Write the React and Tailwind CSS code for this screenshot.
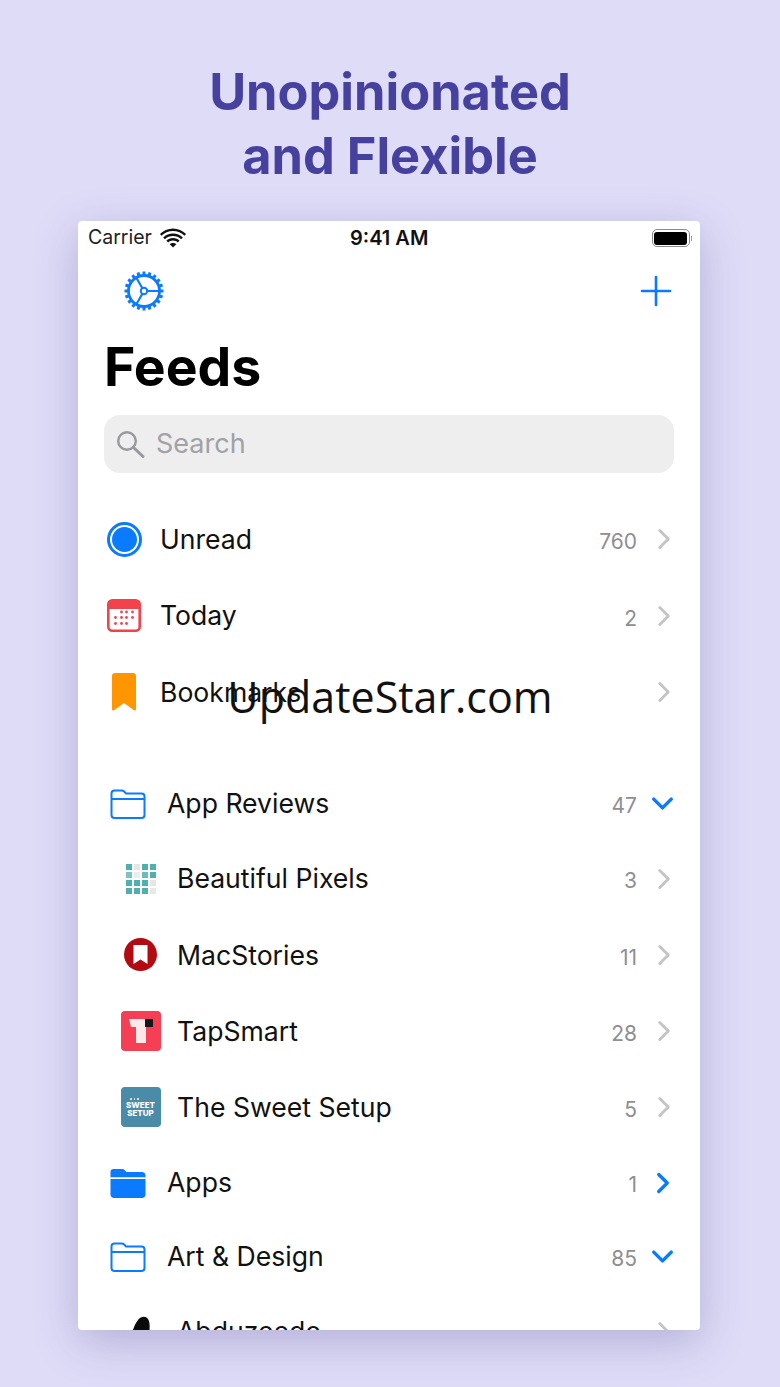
import { ChevronRight, ChevronDown, Plus } from 'lucide-react'

const BLUE = '#0a7aff'

function Gear() {
  const teeth = Array.from({ length: 20 }, (_, i) => (i * 360) / 20)
  return (
    <svg width="42" height="42" viewBox="0 0 42 42" fill="none" stroke={BLUE}>
      <circle cx="21" cy="21" r="15.500" strokeWidth="2.800" />
      {teeth.map(a => (
        <line key={a} x1="21" y1="6" x2="21" y2="1.500" strokeWidth="3" transform={`rotate(${a} 21 21)`} />
      ))}
      <circle cx="21" cy="21" r="3.200" strokeWidth="2" />
      <path d="M24 21H36M19.500 18.500L13.500 8M19.500 23.500L13.500 34" strokeWidth="2.200" />
    </svg>
  )
}

function Folder({ filled }) {
  if (filled) {
    return (
      <svg width="36" height="30" viewBox="0 0 36 30">
        <path d="M3.500 1H12c1.200 0 1.800.4 2.700 1.300L16.500 4H32c2 0 3.500 1.300 3.500 3.300v2H.5V4c0-2 1.200-3 3-3Z" fill={BLUE} />
        <path d="M.5 11h35v15.500c0 2-1.500 3.500-3.500 3.500H4c-2 0-3.500-1.500-3.500-3.500Z" fill={BLUE} />
      </svg>
    )
  }
  return (
    <svg width="36" height="30" viewBox="0 0 36 30" fill="none" stroke={BLUE} strokeWidth="2">
      <path d="M1.500 10V4.500C1.500 2.800 2.600 1.500 4.500 1.500h7.300c1 0 1.600.3 2.300 1l2 2h15.400c1.900 0 3 1.200 3 3v18.500c0 1.700-1.100 3-3 3H4.500c-1.900 0-3-1.300-3-3V10h33" />
    </svg>
  )
}

function Calendar() {
  const dots = [
    [13, 13], [18, 13], [24, 13],
    [7, 18.500], [13, 18.500], [18, 18.500], [24, 18.500],
    [7, 24.500], [13, 24.500], [18, 24.500],
  ]
  return (
    <svg width="34" height="33" viewBox="0 0 34 33">
      <rect x="1.300" y="1.300" width="31.400" height="30.400" rx="4" fill="#fff" stroke="#f2424b" strokeWidth="2.600" />
      <path d="M1 5a4 4 0 0 1 4-4h24a4 4 0 0 1 4 4v5H1Z" fill="#f2424b" />
      {dots.map(([x, y]) => (
        <circle key={`${x}-${y}`} cx={x + 1.500} cy={y} r="1.400" fill="#f2424b" />
      ))}
    </svg>
  )
}

function Bookmark() {
  return (
    <svg width="24" height="38" viewBox="0 0 24 38">
      <path d="M3 0h18a3 3 0 0 1 3 3v33c0 1.500-1.300 2-2.400 1L12 30 2.400 37C1.300 38 0 37.500 0 36V3a3 3 0 0 1 3-3Z" fill="#ff9500" />
    </svg>
  )
}

function Pixels() {
  const cells = [
    '#4fb0b0', '#e6e6e6', '#4fb0b0', '#4fb0b0',
    '#7cc4c4', '#ececec', '#6dbcbc', '#4fb0b0',
    '#4fb0b0', '#4fb0b0', '#4fb0b0', '#e6e6e6',
    '#4fb0b0', '#4fb0b0', '#4fb0b0', '#e8e8e8',
  ]
  return (
    <div className="grid grid-cols-4 gap-[2px] w-[30px]">
      {cells.map((c, i) => (
        <div key={i} className="h-[6px]" style={{ backgroundColor: c }} />
      ))}
    </div>
  )
}

function MacStories() {
  return (
    <svg width="33" height="33" viewBox="0 0 33 33">
      <circle cx="16.500" cy="16.500" r="16.500" fill="#b20c12" />
      <path d="M9.500 7h14v19l-7-4.500-7 4.500Z" fill="#fff" />
    </svg>
  )
}

function TapSmart() {
  return (
    <svg width="40" height="40" viewBox="0 0 40 40">
      <rect width="40" height="40" rx="4" fill="#f43f54" />
      <path d="M8 8h17v24h-10V16H10Z" fill="#fbe9ea" />
      <rect x="24" y="8" width="8" height="8" fill="#16161a" />
    </svg>
  )
}

function SweetSetup() {
  return (
    <div className="w-[40px] h-[40px] rounded-[4px] bg-[#4a8ca8] flex flex-col items-center justify-center font-['Inter',sans-serif] font-extrabold text-white text-[8px] leading-[8px]">
      <div className="flex gap-[2px] mb-[1px] mr-[12px]">
        <div className="w-[1.500px] h-[1.500px] bg-white/70" />
        <div className="w-[1.500px] h-[1.500px] bg-white/70" />
        <div className="w-[1.500px] h-[1.500px] bg-white/70" />
      </div>
      <span>SWEET</span>
      <span>SETUP</span>
    </div>
  )
}

function Abduzeedo() {
  return (
    <svg width="30" height="36" viewBox="0 0 30 36">
      <path d="M2 36C4 26 7 12 12 6c3-4 8-4 10-1 2 3 2 9 1 14l-1 17Z" fill="#0a0a0a" />
      <path d="M25 30l3 1 1 5h-5Z" fill="#0a0a0a" />
    </svg>
  )
}

const TOP = [
  { name: 'Unread', count: '760', icon: (
    <div className="w-[35px] h-[35px] rounded-full border-[3px] border-[#0a7aff] p-[2px]">
      <div className="w-full h-full rounded-full bg-[#0a7aff]" />
    </div>
  ) },
  { name: 'Today', count: '2', icon: <Calendar /> },
  { name: 'Bookmarks', icon: <Bookmark /> },
]

const LIST = [
  { name: 'App Reviews', count: '47', kind: 'folder', open: true, icon: <Folder /> },
  { name: 'Beautiful Pixels', count: '3', icon: <Pixels /> },
  { name: 'MacStories', count: '11', icon: <MacStories /> },
  { name: 'TapSmart', count: '28', icon: <TapSmart /> },
  { name: 'The Sweet Setup', count: '5', icon: <SweetSetup /> },
  { name: 'Apps', count: '1', kind: 'folder', closed: true, icon: <Folder filled /> },
  { name: 'Art & Design', count: '85', kind: 'folder', open: true, icon: <Folder /> },
  { name: 'Abduzeedo', icon: <Abduzeedo /> },
]

function Row({ item, slot, height }) {
  return (
    <div className={`flex items-center ${height}`}>
      <div className={`flex justify-center shrink-0 ${slot}`}>{item.icon}</div>
      <span className="text-[26.600px] text-[#111] leading-none">{item.name}</span>
      <div className="ml-auto flex items-center gap-[8px]">
        {item.count && <span className="text-[21px] text-[#8e8e93] pt-[5px]">{item.count}</span>}
        <div className="w-[36px] flex justify-center">
          {item.open ? (
            <ChevronDown size={35} strokeWidth={2.400} color={BLUE} className="-ml-[1px]" />
          ) : item.closed ? (
            <ChevronRight size={34} strokeWidth={2.400} color={BLUE} />
          ) : (
            <ChevronRight size={34} strokeWidth={2} color="#c4c4c7" className="ml-[1px]" />
          )}
        </div>
      </div>
    </div>
  )
}

export default function App() {
  return (
    <div className="relative h-[1387px] overflow-hidden bg-[#dfdcf8] flex flex-col items-center font-['Inter',sans-serif]">
      <h1 className="pt-[60px] mb-[33px] text-center text-[50.500px] leading-[64px] font-bold text-[#46419f]">
        Unopinionated<br />and Flexible
      </h1>

      <div className="self-start ml-[78px] w-[622px] h-[1109px] shrink-0 bg-white rounded-[4px] overflow-hidden shadow-[0_12px_44px_rgba(70,60,130,0.28)]">
        {/* Status bar */}
        <div className="h-[34px] flex items-center justify-between pl-[10px] pr-[8px] relative">
          <div className="flex items-center gap-[8px]">
            <span className="text-[19.500px] text-[#222]">Carrier</span>
            <svg width="26" height="20" viewBox="0 0 26 20" fill="#111">
              <path d="M13 3C8.500 3 4.500 4.800 1.500 7.700L0 6C3.400 2.700 8 .6 13 .6S22.600 2.700 26 6l-1.500 1.700C21.500 4.800 17.500 3 13 3Z" />
              <path d="M13 8c-3.200 0-6 1.200-8.100 3.200L3.200 9.500C5.800 7 9.200 5.500 13 5.500s7.200 1.500 9.800 4l-1.700 1.700C19 9.200 16.200 8 13 8Z" />
              <path d="M13 12.500c-1.900 0-3.500.7-4.800 1.900l-1.800-1.800c1.700-1.700 4-2.700 6.600-2.700s4.900 1 6.600 2.700l-1.800 1.800c-1.300-1.200-2.900-1.900-4.800-1.900Z" />
              <path d="M13 19.500l-3.300-3.300c.9-.8 2-1.300 3.300-1.300s2.400.5 3.300 1.300Z" />
            </svg>
          </div>
          <span className="text-[20px] font-semibold text-[#111] absolute left-[272px]">9:41 AM</span>
          <div className="flex items-center gap-[1px]">
            <div className="w-[38px] h-[18px] rounded-[5px] border-[1.500px] border-[#8a8a8a] p-[1.500px]">
              <div className="w-full h-full rounded-[3px] bg-black" />
            </div>
            <div className="w-[1.500px] h-[5px] bg-[#999]" />
          </div>
        </div>

        {/* Nav */}
        <div className="h-[72px] flex items-center justify-between pl-[45px] pr-[20px]">
          <Gear />
          <Plus size={48} strokeWidth={1.300} color={BLUE} />
        </div>

        <div className="mt-[9px] pl-[26px] text-[53.500px] leading-[62px] font-bold text-black">Feeds</div>

        {/* Search */}
        <div className="mx-[26px] mt-[17px] h-[58px] rounded-[16px] bg-[#eeeeef] flex items-center pl-[13px] gap-[11px]">
          <svg width="28" height="27" viewBox="0 0 28 27" fill="none" stroke="#98989d" strokeWidth="2.400" strokeLinecap="round">
            <circle cx="10" cy="10" r="8.800" />
            <path d="M16.500 16.500L26 25.500" strokeWidth="3" />
          </svg>
          <span className="text-[27px] text-[#a1a1a6] pt-[1px]">Search</span>
        </div>

        <div className="mt-[28px] pl-[28px] pr-[19px]">
          {TOP.map(item => (
            <Row key={item.name} item={item} slot="w-[36px] mr-[18px]" height="h-[76.500px]" />
          ))}
          <div className="h-[36px]" />
          {LIST.map(item => (
            <Row
              key={item.name}
              item={item}
              slot={item.kind === 'folder' ? 'w-[43px] mr-[18px]' : 'w-[69px] mr-[2px]'}
              height={item.kind === 'folder' ? 'h-[74px]' : 'h-[76.250px]'}
            />
          ))}
        </div>
      </div>

      {/* Watermark over the page */}
      <div className="absolute left-0 right-0 top-[668px] text-center text-[43px] leading-[58px] text-[#111] font-['Open_Sans',sans-serif]">
        UpdateStar.com
      </div>
    </div>
  )
}
